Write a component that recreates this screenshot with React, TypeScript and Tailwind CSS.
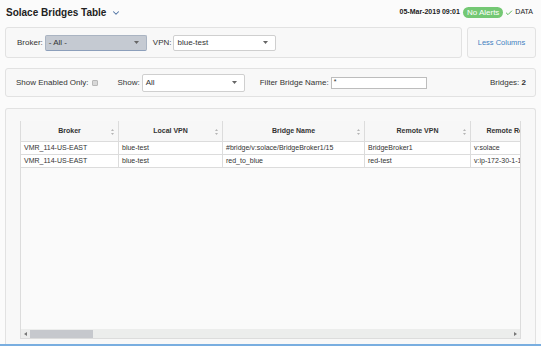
import { ChevronDown, Check } from "lucide-react";

type Column = {
  key: string;
  label: string;
  width: string;
};

const COLUMNS: Column[] = [
  { key: "broker", label: "Broker", width: "w-[98px]" },
  { key: "localVpn", label: "Local VPN", width: "w-[104px]" },
  { key: "bridgeName", label: "Bridge Name", width: "w-[142px]" },
  { key: "remoteVpn", label: "Remote VPN", width: "w-[106px]" },
  { key: "remoteRouter", label: "Remote Router", width: "w-[82px]" },
];

const ROWS: Record<string, string>[] = [
  {
    broker: "VMR_114-US-EAST",
    localVpn: "blue-test",
    bridgeName: "#bridge/v:solace/BridgeBroker1/15",
    remoteVpn: "BridgeBroker1",
    remoteRouter: "v:solace",
  },
  {
    broker: "VMR_114-US-EAST",
    localVpn: "blue-test",
    bridgeName: "red_to_blue",
    remoteVpn: "red-test",
    remoteRouter: "v:ip-172-30-1-171",
  },
];

function SortIcon() {
  return (
    <svg width="3" height="6" viewBox="0 0 3 6" className="shrink-0">
      <path d="M1.5 0 L3 2 L0 2 Z" fill="#b5b5b5" />
      <path d="M1.5 6 L3 4 L0 4 Z" fill="#b5b5b5" />
    </svg>
  );
}

function Caret() {
  return (
    <svg width="5" height="3" viewBox="0 0 5 3" className="shrink-0">
      <path d="M0 0 L5 0 L2.5 3 Z" fill="#666" />
    </svg>
  );
}

function Select({ value, className }: { value: string; className: string }) {
  return (
    <div
      className={`flex items-center justify-between rounded-[2px] border px-[3px] text-[8px] text-[#333] ${className}`}
    >
      <span>{value}</span>
      <span className="mr-[4px]">
        <Caret />
      </span>
    </div>
  );
}

export default function App() {
  return (
    <div className="flex h-[346px] w-[541px] flex-col overflow-hidden bg-[#fbfbfb] font-['Liberation_Sans',Arial,sans-serif] text-[#333]">
      <div className="flex h-[27px] shrink-0 items-center justify-between pl-[6px] pr-[8px] pb-[2px]">
        <div className="flex items-center gap-[5px]">
          <h1 className="text-[10px] font-bold text-[#222]">
            Solace Bridges Table
          </h1>
          <ChevronDown size={10} strokeWidth={2.5} className="text-[#4a6fa0]" />
        </div>
        <div className="flex items-center gap-[2px] text-[7px]">
          <span className="mr-[1px] font-bold text-[#222]">
            05-Mar-2019 09:01
          </span>
          <span className="rounded-full bg-[#74c874] px-[4px] py-[1px] text-[8px] leading-[9px] text-white">
            No Alerts
          </span>
          <Check size={8} strokeWidth={3} className="text-[#5cb85c]" />
          <span className="text-[#222]">DATA</span>
        </div>
      </div>

      <div className="flex h-[31px] shrink-0 gap-[5px] px-[5px]">
        <div className="flex flex-1 items-center rounded-[3px] border border-[#e2e2e2] bg-[#f8f8f8] pl-[11px]">
          <span className="mr-[2px] text-[8px]">Broker:</span>
          <Select
            value="- All -"
            className="h-[16px] w-[102px] border-[#aab4c2] border-b-[#8c9fbb] bg-[#c5cad2]"
          />
          <span className="ml-[6px] mr-[2px] text-[8px]">VPN:</span>
          <Select
            value="blue-test"
            className="h-[16px] w-[103px] border-[#cfcfcf] bg-white"
          />
        </div>
        <div className="flex w-[69px] items-center justify-center rounded-[3px] border border-[#e2e2e2] bg-[#f8f8f8]">
          <span className="text-[7.5px] text-[#3f7fc0]">Less Columns</span>
        </div>
      </div>

      <div className="mx-[5px] mt-[10px] flex h-[29px] shrink-0 items-center rounded-[3px] border border-[#e2e2e2] bg-[#f8f8f8] pl-[10px] pr-[9px] text-[8px]">
        <span>Show Enabled Only:</span>
        <span className="ml-[3px] h-[6px] w-[6px] rounded-[1px] border border-[#b8b8b8] bg-[#d8d8d8]" />
        <span className="ml-[20px] mr-[2px]">Show:</span>
        <Select
          value="All"
          className="h-[18px] w-[103px] border-[#cfcfcf] bg-white"
        />
        <span className="ml-[15px] mr-[2px]">Filter Bridge Name:</span>
        <div className="flex h-[12px] w-[96px] items-center border border-[#bdbdbd] bg-white px-[2px] text-[7px]">
          *
        </div>
        <span className="ml-auto">
          Bridges: <b>2</b>
        </span>
      </div>

      <div className="mx-[5px] mt-[11px] flex min-h-0 flex-1 flex-col rounded-t-[3px] border border-b-0 border-[#e2e2e2] bg-[#f8f8f8] pl-[14px] pr-[14px] pt-[12px]">
        <div className="flex min-h-0 flex-1 flex-col overflow-hidden border-l border-r border-[#dcdcdc] bg-[#fafafa]">
          <div className="flex min-h-0 flex-1 flex-col overflow-hidden">
            <div className="flex h-[21px] shrink-0 border-b border-[#dcdcdc] bg-[#f7f7f7]">
              {COLUMNS.map((col) => (
                <div
                  key={col.key}
                  className={`relative flex shrink-0 items-center justify-center border-r border-[#dcdcdc] text-[7px] font-bold text-[#333] ${col.width}`}
                >
                  <span className="whitespace-nowrap">{col.label}</span>
                  <span className="absolute right-[4px] top-[8px]">
                    <SortIcon />
                  </span>
                </div>
              ))}
            </div>
            {ROWS.map((row, i) => (
              <div
                key={i}
                className="flex h-[13px] shrink-0 border-b border-[#dcdcdc] bg-white"
              >
                {COLUMNS.map((col) => (
                  <div
                    key={col.key}
                    className={`flex shrink-0 items-center overflow-hidden whitespace-nowrap border-r border-[#dcdcdc] px-[3px] text-[7px] text-[#333] ${col.width}`}
                  >
                    {row[col.key]}
                  </div>
                ))}
              </div>
            ))}
          </div>
          <div className="flex h-[10px] shrink-0 items-center border-b border-[#dcdcdc] bg-[#ecedec] px-[3px]">
            <svg width="3" height="4" viewBox="0 0 3 4">
              <path d="M3 0 L3 4 L0 2 Z" fill="#777" />
            </svg>
            <div className="ml-[3px] h-[8px] w-[63px] bg-[#c6c8cd]" />
            <div className="flex-1" />
            <svg width="3" height="4" viewBox="0 0 3 4">
              <path d="M0 0 L0 4 L3 2 Z" fill="#777" />
            </svg>
          </div>
        </div>
        <div className="h-[5px] shrink-0" />
      </div>
      <div className="h-[2px] shrink-0 bg-[#79aee0]" />
    </div>
  );
}
